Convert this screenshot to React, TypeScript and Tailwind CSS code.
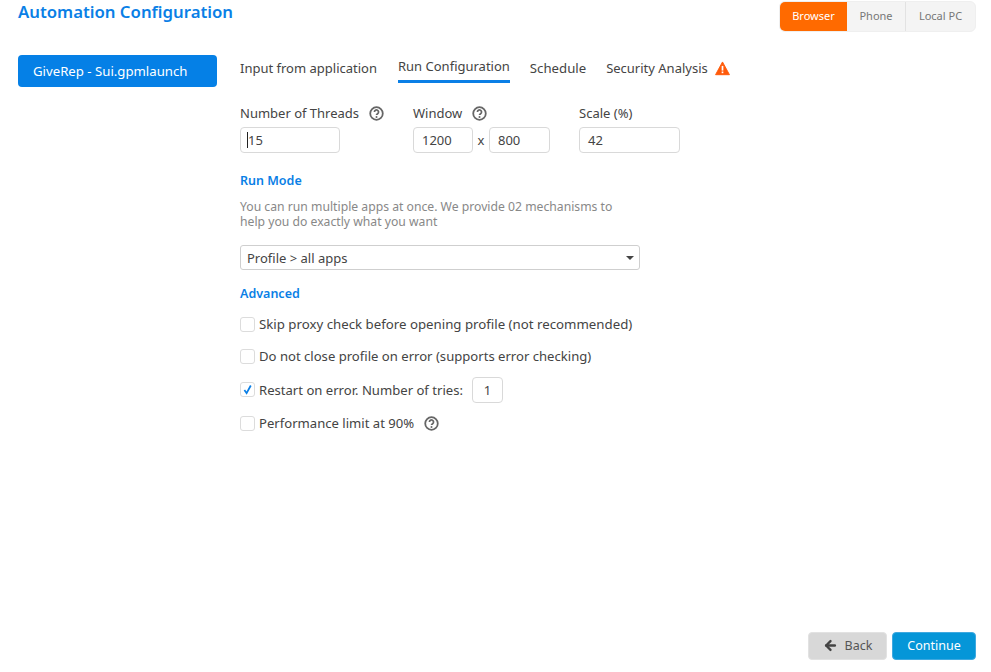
import { ArrowLeft } from "lucide-react";

const font = { fontFamily: '"Noto Sans", sans-serif' };

function Help() {
  return (
    <svg viewBox="0 0 16 16" className="w-[15px] h-[15px] shrink-0">
      <circle cx="8" cy="8" r="6.7" fill="none" stroke="#666" strokeWidth="1.9" />
      <path d="M5.8 6.4a2.2 2.2 0 1 1 3.4 1.8c-.8.5-1.2.8-1.2 1.5" fill="none" stroke="#666" strokeWidth="1.8" />
      <circle cx="8" cy="11.8" r="1.05" fill="#666" />
    </svg>
  );
}

function Check({ checked, label, wide }: { checked?: boolean; label: string; wide?: boolean }) {
  return (
    <div className={`flex items-center gap-[4px] ${wide ? "text-[13.25px]" : "text-[13.1px]"}`}>
      <span className="w-[15px] h-[15px] rounded-[3px] border border-[#dcdcdc] bg-white flex items-center justify-center">
        {checked && (
          <svg viewBox="0 0 12 12" className="w-[11px] h-[11px]">
            <path d="M2.6 6.6 5 10 9.6 1.6" fill="none" stroke="#0a7fe6" strokeWidth="1.9" />
          </svg>
        )}
      </span>
      <span>{label}</span>
    </div>
  );
}

export default function App() {
  return (
    <div style={font} className="relative h-[672px] w-[991px] overflow-hidden bg-white text-[13px] leading-[18px] text-[#444] flex flex-col">
      <header className="flex justify-between pl-[18px] pr-[15px] pt-px h-[55px] shrink-0">
        <h1 className="text-[16.75px] leading-[22px] font-semibold text-[#0a7fe6]">Automation Configuration</h1>
        <div className="flex h-[31px] rounded-[6px] overflow-hidden bg-[#f4f4f4] border border-[#efefef] text-[11px] leading-[16px] text-[#777]">
          <div className="w-[67px] bg-[#ff6a00] text-white flex items-center justify-center pb-px">Browser</div>
          <div className="w-[59px] border-r border-[#e2e2e2] flex items-center justify-center pb-px">Phone</div>
          <div className="flex-1 w-[69px] flex items-center justify-center pb-px">Local PC</div>
        </div>
      </header>

      <div className="flex flex-1 pl-[18px]">
        <div className="w-[199px] h-[32px] rounded-[4px] bg-[#0580e6] text-white text-[13.2px] flex items-center pl-[15px] shrink-0">
          GiveRep - Sui.gpmlaunch
        </div>

        <main className="ml-[23px] w-[440px]">
          <nav className="flex h-[28px] whitespace-nowrap">
            <div className="pt-[4px] mr-[21px]">Input from application</div>
            <div className="mr-[20px] pt-[2px] border-b-[3px] border-[#0a7fe6] h-[28px]">Run Configuration</div>
            <div className="pt-[4px] mr-[20px] text-[13.2px]">Schedule</div>
            <div className="pt-[4px] flex items-start gap-[7px]">
              Security Analysis
              <svg viewBox="0 0 16 16" className="w-[15px] h-[15px] mt-[2px]">
                <path d="M8 1 15.4 14.6H.6Z" fill="#ff5a0a" stroke="#ff5a0a" strokeWidth="1" strokeLinejoin="round" />
                <rect x="7.1" y="5.2" width="1.8" height="5" fill="#fff" />
                <rect x="7.1" y="11.2" width="1.8" height="1.8" fill="#fff" />
              </svg>
            </div>
          </nav>

          <div className="flex mt-[21px]">
            <div className="w-[173px] shrink-0">
              <div className="flex items-center gap-[10px] h-[18px] whitespace-nowrap">Number of Threads <Help /></div>
              <div className="mt-[5px] w-[100px] h-[26px] rounded-[4px] border border-[#d9d9d9] flex items-center pl-[6px]">
                <span className="w-px h-[16px] bg-[#222]" />15
              </div>
            </div>
            <div className="w-[166px] shrink-0">
              <div className="flex items-center gap-[10px] h-[18px]">Window <Help /></div>
              <div className="mt-[5px] flex items-center">
                <div className="w-[60px] h-[26px] rounded-[4px] border border-[#d9d9d9] flex items-center pl-[8px]">1200</div>
                <span className="w-[16px] text-center">x</span>
                <div className="w-[61px] h-[26px] rounded-[4px] border border-[#d9d9d9] flex items-center pl-[8px]">800</div>
              </div>
            </div>
            <div className="shrink-0">
              <div className="h-[18px]">Scale (%)</div>
              <div className="mt-[5px] w-[101px] h-[26px] rounded-[4px] border border-[#d9d9d9] flex items-center pl-[8px]">42</div>
            </div>
          </div>

          <h2 className="mt-[19px] text-[12.5px] font-semibold text-[#0a7fe6]">Run Mode</h2>
          <p className="mt-[9px] w-[380px] text-[12.2px] leading-[15px] text-[#888]">
            You can run multiple apps at once. We provide 02 mechanisms to help you do exactly what you want
          </p>

          <div className="mt-[16px] w-[400px] h-[25px] rounded-[3px] border border-[#cfcfcf] flex items-center justify-between pl-[6px] pr-[5px]">
            Profile &gt; all apps
            <span className="w-0 h-0 border-x-[4px] border-x-transparent border-t-[4px] border-t-[#444]" />
          </div>

          <h2 className="mt-[15px] text-[12.5px] font-semibold text-[#0a7fe6]">Advanced</h2>

          <div className="mt-[12px] flex flex-col">
            <div className="h-[32px]"><Check wide label="Skip proxy check before opening profile (not recommended)" /></div>
            <div className="h-[22px]"><Check label="Do not close profile on error (supports error checking)" /></div>
            <div className="h-[41px] flex items-center">
              <Check checked label="Restart on error. Number of tries:" />
              <div className="ml-[9px] w-[31px] h-[26px] rounded-[4px] border border-[#d9d9d9] flex items-center justify-center">1</div>
            </div>
            <div className="mt-[4px] flex items-center gap-[10px]">
              <Check label="Performance limit at 90%" />
              <Help />
            </div>
          </div>
        </main>
      </div>

      <footer className="flex justify-end gap-[5px] pr-[15px] pb-[12px]">
        <button className="w-[79px] h-[28px] rounded-[4px] bg-[#d8d8d8] border border-[#e2e2e2] flex items-center justify-center gap-[7px] text-[12.5px] text-[#555] pb-px">
          <ArrowLeft size={15} strokeWidth={3.8} className="text-[#444]" /> Back
        </button>
        <button className="w-[84px] h-[28px] rounded-[4px] bg-[#0596d8] border border-[#3fa9e0] text-[12.5px] text-white pb-px">Continue</button>
      </footer>
    </div>
  );
}
